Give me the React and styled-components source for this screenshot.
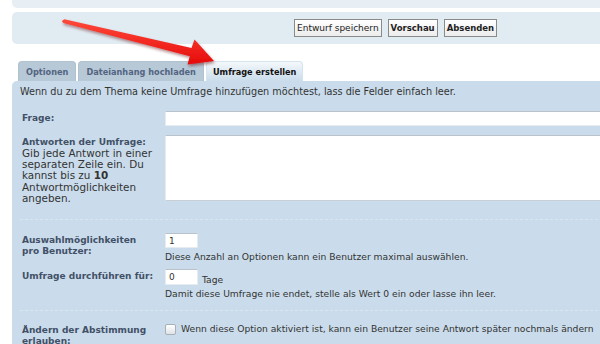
import styled, { createGlobalStyle } from "styled-components";

const GlobalStyle = createGlobalStyle`
  html, body {
    margin: 0;
    background: #ffffff;
    overflow: hidden;
  }
  body {
    font-family: "DejaVu Sans", Verdana, sans-serif;
    color: #333333;
  }
`;

const App = () => {
  return (
    <>
      <GlobalStyle />
      <Page>
        <TopPanel />
        <ButtonBar>
          <Button>Entwurf speichern</Button>
          <Button bold>Vorschau</Button>
          <Button bold>Absenden</Button>
        </ButtonBar>

        <Tabs>
          <Tab>Optionen</Tab>
          <Tab>Dateianhang hochladen</Tab>
          <Tab active>Umfrage erstellen</Tab>
        </Tabs>

        <Content>
          <Intro>
            Wenn du zu dem Thema keine Umfrage hinzufügen möchtest, lass die
            Felder einfach leer.
          </Intro>

          <Fields>
            <Row>
              <Label>Frage:</Label>
              <Field>
                <TextInput />
              </Field>
            </Row>
            <Row gap="9px">
              <Label>
                Antworten der Umfrage:
                <Hint>
                  Gib jede Antwort in einer separaten Zeile ein. Du kannst bis
                  zu <b>10</b> Antwortmöglichkeiten angeben.
                </Hint>
              </Label>
              <Field>
                <TextArea />
              </Field>
            </Row>

            <Separator above="15px" below="13px" />

            <Row>
              <Label>Auswahlmöglichkeiten pro Benutzer:</Label>
              <Field>
                <SmallInput>1</SmallInput>
                <Help>
                  Diese Anzahl an Optionen kann ein Benutzer maximal auswählen.
                </Help>
              </Field>
            </Row>
            <Row gap="6px">
              <Label>Umfrage durchführen für:</Label>
              <Field>
                <Inline>
                  <SmallInput tall>0</SmallInput>
                  <Unit>Tage</Unit>
                </Inline>
                <Help>
                  Damit diese Umfrage nie endet, stelle als Wert 0 ein oder
                  lasse ihn leer.
                </Help>
              </Field>
            </Row>

            <Separator above="10px" below="12px" />

            <Row>
              <Label>Ändern der Abstimmung erlauben:</Label>
              <Field>
                <Inline>
                  <Checkbox />
                  <CheckText>
                    Wenn diese Option aktiviert ist, kann ein Benutzer seine
                    Antwort später nochmals ändern
                  </CheckText>
                </Inline>
              </Field>
            </Row>
          </Fields>
        </Content>

        <Arrow viewBox="0 0 600 100" width="600" height="100">
          <defs>
            <linearGradient id="arrowFill" x1="0" y1="0" x2="0" y2="1">
              <stop offset="0%" stopColor="#ff4a3a" />
              <stop offset="100%" stopColor="#e60a0a" />
            </linearGradient>
            <filter id="arrowShadow" x="-10%" y="-30%" width="120%" height="160%">
              <feDropShadow dx="1" dy="2" stdDeviation="1.5" floodColor="#5a0000" floodOpacity="0.45" />
            </filter>
          </defs>
          <polygon
            filter="url(#arrowShadow)"
            fill="url(#arrowFill)"
            points="64.4,19.3 191.5,48 194.5,39.5 214,61 187.5,64.5 189.8,56.2 63.4,23 61.8,21"
          />
        </Arrow>
      </Page>
    </>
  );
};

const Page = styled.div`
  position: relative;
  width: 788px;
  height: 344px;
  padding-left: 12px;
  box-sizing: border-box;
`;

const TopPanel = styled.div`
  height: 8px;
  background: #e8eff4;
  border-bottom-left-radius: 5px;
`;

const ButtonBar = styled.div`
  margin-top: 4px;
  height: 32px;
  background: #e1ebf2;
  border-radius: 5px 0 0 5px;
  display: flex;
  align-items: center;
  gap: 6px;
  padding-left: 282px;
`;

const Button = styled.button`
  height: 18px;
  padding: 0 2px;
  border: 1px solid #8a8a8a;
  border-radius: 0;
  background: linear-gradient(180deg, #ffffff 0%, #ececec 100%);
  font-family: "DejaVu Sans", Verdana, sans-serif;
  font-size: ${(props) => (props.bold ? "8.5px" : "9px")};
  font-weight: ${(props) => (props.bold ? 700 : 400)};
  color: #222222;
  line-height: 16px;
`;

const Tabs = styled.div`
  margin-top: 17px;
  padding-left: 6px;
  display: flex;
  gap: 2px;
  height: 20px;
`;

const Tab = styled.div`
  height: 20px;
  padding: 0 ${(props) => (props.active ? "6px" : "7px")};
  border-radius: 4px 4px 0 0;
  display: flex;
  align-items: center;
  font-size: 8.2px;
  font-weight: 700;
  color: ${(props) => (props.active ? "#111111" : "#536482")};
  background: ${(props) =>
    props.active
      ? "linear-gradient(180deg, #f4f8fb 0%, #cadceb 100%)"
      : "#b7c8d6"};
  border: 1px solid ${(props) => (props.active ? "#d6e4ef" : "#b0c1cf")};
  border-bottom: none;
  box-sizing: border-box;
`;

const Content = styled.div`
  background: #cadceb;
  border-radius: 5px 0 0 0;
  padding: 4px 0 0 8px;
  height: 263px;
`;

const Intro = styled.p`
  margin: 0;
  font-size: 9.7px;
  line-height: 14px;
  color: #333333;
`;

const Fields = styled.div`
  margin-top: 12px;
  padding-left: 2px;
`;

const Row = styled.div`
  display: grid;
  grid-template-columns: 143px 1fr;
  margin-top: ${(props) => props.gap || "0"};
`;

const Label = styled.div`
  font-size: 9px;
  line-height: 11px;
  font-weight: 700;
  color: #425067;
  padding-top: 2px;
  padding-right: 12px;
`;

const Hint = styled.span`
  display: block;
  font-size: 10.4px;
  font-weight: 400;
  color: #333333;
  line-height: 11.2px;

  b {
    font-weight: 700;
  }
`;

const Field = styled.div`
  display: flex;
  flex-direction: column;
  align-items: flex-start;
`;

const TextInput = styled.div`
  width: 100%;
  height: 15px;
  background: #ffffff;
  border: 1px solid #e6ebef;
  border-top-color: #b9c2ca;
  box-sizing: border-box;
`;

const TextArea = styled.div`
  width: 100%;
  height: 66px;
  background: #ffffff;
  border: 1px solid #e6ebef;
  border-top-color: #b9c2ca;
  border-bottom-color: #c8cfd5;
  box-sizing: border-box;
`;

const SmallInput = styled.div`
  width: 33px;
  height: ${(props) => (props.tall ? "16px" : "15px")};
  background: #ffffff;
  border: 1px solid #e6ebef;
  border-top-color: #b9c2ca;
  box-sizing: border-box;
  padding-left: 3px;
  font-size: 9px;
  line-height: 14px;
  color: #333333;
`;

const Inline = styled.div`
  display: flex;
  align-items: flex-start;
`;

const Unit = styled.span`
  margin-left: 4px;
  margin-top: 5px;
  font-size: 9.2px;
  line-height: 11px;
  color: #333333;
`;

const Help = styled.div`
  margin-top: 3px;
  font-size: 9.2px;
  line-height: 12px;
  color: #333333;
`;

const Separator = styled.div`
  margin: ${(props) => props.above} 0 ${(props) => props.below} -2px;
  border-top: 1px dashed #d9e5ef;
`;

const Checkbox = styled.span`
  flex: none;
  width: 9px;
  height: 9px;
  margin-top: 1px;
  border: 1px solid #a9afb5;
  border-radius: 2px;
  background: linear-gradient(180deg, #ffffff 0%, #dfe3e7 100%);
`;

const CheckText = styled.span`
  margin-left: 5px;
  font-size: 9.2px;
  line-height: 11px;
  color: #333333;
  white-space: nowrap;
`;

const Arrow = styled.svg`
  position: absolute;
  top: 0;
  left: 0;
  pointer-events: none;
`;

export default App;
